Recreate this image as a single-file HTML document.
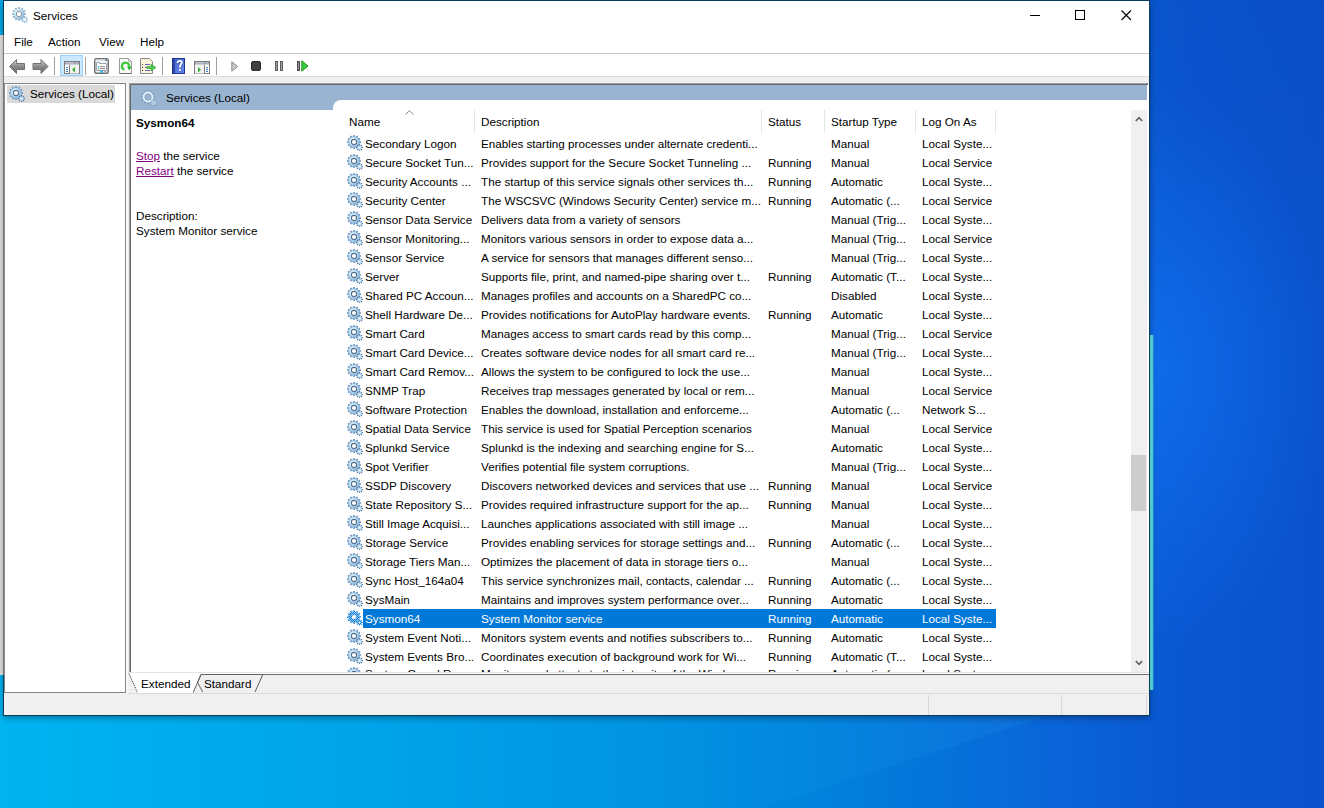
<!DOCTYPE html><html><head><meta charset="utf-8"><style>
*{box-sizing:border-box}
html,body{margin:0;padding:0}
body{width:1324px;height:808px;overflow:hidden;position:relative;font-family:"Liberation Sans", sans-serif;font-size:11.7px;color:#000;
background:
 radial-gradient(ellipse 170px 280px at 1160px 370px, rgba(20,125,255,0.5), rgba(20,125,255,0) 100%),
 linear-gradient(to bottom, rgba(0,20,110,0.07) 0%, rgba(0,20,110,0) 40%),
 linear-gradient(to right, #00b4f0 0%, #00a2e8 30%, #0094e2 48%, #0082dc 62%, #0a64d8 80%, #0a56d2 90%, #0a52cc 100%);}
.a{position:absolute;white-space:nowrap}
.t{position:absolute;white-space:nowrap;line-height:15px;height:15px}
#win{position:absolute;left:3px;top:0;width:1147px;height:716px;background:#fff;border:1px solid #0b3c5d;box-shadow:0 2px 6px rgba(0,0,0,0.35)}
#behind{position:absolute;left:0;top:35px;width:3px;height:640px;background:#e3e3e3}
.sep{position:absolute;width:1px;background:#a0a0a0}
.row{position:absolute;left:0;height:19px;line-height:19px;width:1000px}
.c{position:absolute;top:0;white-space:nowrap;overflow:hidden}
.hd{position:absolute;top:0;height:24px;line-height:24px;white-space:nowrap}
.hdiv{position:absolute;top:0;width:1px;height:23px;background:#e5e5e5}
</style></head><body>
<svg width="0" height="0" style="position:absolute">
<defs>
<radialGradient id="gb" cx="0.4" cy="0.4" r="0.7">
<stop offset="0" stop-color="#f4fcff"/><stop offset="0.55" stop-color="#cdeaf8"/><stop offset="1" stop-color="#8ab6dc"/>
</radialGradient>
<symbol id="gear" viewBox="0 0 16 16">
<g fill="#6d94bc"><rect x="6.2" y="0" width="1.6" height="2.4" transform="rotate(0 7 7)"/><rect x="6.2" y="0" width="1.6" height="2.4" transform="rotate(30 7 7)"/><rect x="6.2" y="0" width="1.6" height="2.4" transform="rotate(60 7 7)"/><rect x="6.2" y="0" width="1.6" height="2.4" transform="rotate(90 7 7)"/><rect x="6.2" y="0" width="1.6" height="2.4" transform="rotate(120 7 7)"/><rect x="6.2" y="0" width="1.6" height="2.4" transform="rotate(150 7 7)"/><rect x="6.2" y="0" width="1.6" height="2.4" transform="rotate(180 7 7)"/><rect x="6.2" y="0" width="1.6" height="2.4" transform="rotate(210 7 7)"/><rect x="6.2" y="0" width="1.6" height="2.4" transform="rotate(240 7 7)"/><rect x="6.2" y="0" width="1.6" height="2.4" transform="rotate(270 7 7)"/><rect x="6.2" y="0" width="1.6" height="2.4" transform="rotate(300 7 7)"/><rect x="6.2" y="0" width="1.6" height="2.4" transform="rotate(330 7 7)"/></g>
<circle cx="7" cy="7" r="4.3" fill="none" stroke="url(#gb)" stroke-width="2.6"/>
<circle cx="7" cy="7" r="5.6" fill="none" stroke="#7ea6cc" stroke-width="0.6"/>
<circle cx="7" cy="7" r="2.6" fill="#fff" stroke="#55708f" stroke-width="1.1"/>
<g fill="#55789e"><rect x="12.0" y="9.0" width="1.1" height="1.6" transform="rotate(0 12.55 12.55)"/><rect x="12.0" y="9.0" width="1.1" height="1.6" transform="rotate(45 12.55 12.55)"/><rect x="12.0" y="9.0" width="1.1" height="1.6" transform="rotate(90 12.55 12.55)"/><rect x="12.0" y="9.0" width="1.1" height="1.6" transform="rotate(135 12.55 12.55)"/><rect x="12.0" y="9.0" width="1.1" height="1.6" transform="rotate(180 12.55 12.55)"/><rect x="12.0" y="9.0" width="1.1" height="1.6" transform="rotate(225 12.55 12.55)"/><rect x="12.0" y="9.0" width="1.1" height="1.6" transform="rotate(270 12.55 12.55)"/><rect x="12.0" y="9.0" width="1.1" height="1.6" transform="rotate(315 12.55 12.55)"/></g>
<circle cx="12.55" cy="12.55" r="2.4" fill="#8fb6d8"/><circle cx="12.55" cy="12.55" r="1.9" fill="#c4e2f4"/><circle cx="12.55" cy="12.55" r="0.8" fill="#fff"/>
</symbol>
<symbol id="gearsel" viewBox="0 0 16 16">
<g fill="url(#dith)"><rect x="6.2" y="0" width="1.6" height="2.4" transform="rotate(0 7 7)"/><rect x="6.2" y="0" width="1.6" height="2.4" transform="rotate(30 7 7)"/><rect x="6.2" y="0" width="1.6" height="2.4" transform="rotate(60 7 7)"/><rect x="6.2" y="0" width="1.6" height="2.4" transform="rotate(90 7 7)"/><rect x="6.2" y="0" width="1.6" height="2.4" transform="rotate(120 7 7)"/><rect x="6.2" y="0" width="1.6" height="2.4" transform="rotate(150 7 7)"/><rect x="6.2" y="0" width="1.6" height="2.4" transform="rotate(180 7 7)"/><rect x="6.2" y="0" width="1.6" height="2.4" transform="rotate(210 7 7)"/><rect x="6.2" y="0" width="1.6" height="2.4" transform="rotate(240 7 7)"/><rect x="6.2" y="0" width="1.6" height="2.4" transform="rotate(270 7 7)"/><rect x="6.2" y="0" width="1.6" height="2.4" transform="rotate(300 7 7)"/><rect x="6.2" y="0" width="1.6" height="2.4" transform="rotate(330 7 7)"/></g>
<circle cx="7" cy="7" r="4.3" fill="none" stroke="url(#dith)" stroke-width="2.8"/>
<circle cx="7" cy="7" r="2.6" fill="#fff" stroke="url(#dith)" stroke-width="1.1"/>
<g fill="url(#dith)"><rect x="12.0" y="9.0" width="1.1" height="1.6" transform="rotate(0 12.55 12.55)"/><rect x="12.0" y="9.0" width="1.1" height="1.6" transform="rotate(45 12.55 12.55)"/><rect x="12.0" y="9.0" width="1.1" height="1.6" transform="rotate(90 12.55 12.55)"/><rect x="12.0" y="9.0" width="1.1" height="1.6" transform="rotate(135 12.55 12.55)"/><rect x="12.0" y="9.0" width="1.1" height="1.6" transform="rotate(180 12.55 12.55)"/><rect x="12.0" y="9.0" width="1.1" height="1.6" transform="rotate(225 12.55 12.55)"/><rect x="12.0" y="9.0" width="1.1" height="1.6" transform="rotate(270 12.55 12.55)"/><rect x="12.0" y="9.0" width="1.1" height="1.6" transform="rotate(315 12.55 12.55)"/></g>
<circle cx="12.55" cy="12.55" r="1.6" fill="none" stroke="url(#dith)" stroke-width="1.6"/>
</symbol>
<symbol id="gearfaint" viewBox="0 0 16 16">
<g fill="#6f8fb2" opacity="0.55"><rect x="6.2" y="0" width="1.6" height="2.4" transform="rotate(0 7 7)"/><rect x="6.2" y="0" width="1.6" height="2.4" transform="rotate(30 7 7)"/><rect x="6.2" y="0" width="1.6" height="2.4" transform="rotate(60 7 7)"/><rect x="6.2" y="0" width="1.6" height="2.4" transform="rotate(90 7 7)"/><rect x="6.2" y="0" width="1.6" height="2.4" transform="rotate(120 7 7)"/><rect x="6.2" y="0" width="1.6" height="2.4" transform="rotate(150 7 7)"/><rect x="6.2" y="0" width="1.6" height="2.4" transform="rotate(180 7 7)"/><rect x="6.2" y="0" width="1.6" height="2.4" transform="rotate(210 7 7)"/><rect x="6.2" y="0" width="1.6" height="2.4" transform="rotate(240 7 7)"/><rect x="6.2" y="0" width="1.6" height="2.4" transform="rotate(270 7 7)"/><rect x="6.2" y="0" width="1.6" height="2.4" transform="rotate(300 7 7)"/><rect x="6.2" y="0" width="1.6" height="2.4" transform="rotate(330 7 7)"/></g>
<circle cx="7" cy="7" r="4.4" fill="none" stroke="#dcf6ff" stroke-width="2"/>
<circle cx="7" cy="7" r="3.2" fill="none" stroke="#8a8c90" stroke-width="0.7" opacity="0.6"/>
<g fill="#6f8fb2" opacity="0.6"><rect x="12.0" y="9.0" width="1.1" height="1.6" transform="rotate(0 12.55 12.55)"/><rect x="12.0" y="9.0" width="1.1" height="1.6" transform="rotate(45 12.55 12.55)"/><rect x="12.0" y="9.0" width="1.1" height="1.6" transform="rotate(90 12.55 12.55)"/><rect x="12.0" y="9.0" width="1.1" height="1.6" transform="rotate(135 12.55 12.55)"/><rect x="12.0" y="9.0" width="1.1" height="1.6" transform="rotate(180 12.55 12.55)"/><rect x="12.0" y="9.0" width="1.1" height="1.6" transform="rotate(225 12.55 12.55)"/><rect x="12.0" y="9.0" width="1.1" height="1.6" transform="rotate(270 12.55 12.55)"/><rect x="12.0" y="9.0" width="1.1" height="1.6" transform="rotate(315 12.55 12.55)"/></g>
<circle cx="12.55" cy="12.55" r="1.7" fill="none" stroke="#c8e4f2" stroke-width="1.4" opacity="0.8"/>
</symbol>
<symbol id="geartitle" viewBox="0 0 16 16">
<g fill="#8eaccb"><rect x="6.2" y="0" width="1.6" height="2.4" transform="rotate(0 7 7)"/><rect x="6.2" y="0" width="1.6" height="2.4" transform="rotate(30 7 7)"/><rect x="6.2" y="0" width="1.6" height="2.4" transform="rotate(60 7 7)"/><rect x="6.2" y="0" width="1.6" height="2.4" transform="rotate(90 7 7)"/><rect x="6.2" y="0" width="1.6" height="2.4" transform="rotate(120 7 7)"/><rect x="6.2" y="0" width="1.6" height="2.4" transform="rotate(150 7 7)"/><rect x="6.2" y="0" width="1.6" height="2.4" transform="rotate(180 7 7)"/><rect x="6.2" y="0" width="1.6" height="2.4" transform="rotate(210 7 7)"/><rect x="6.2" y="0" width="1.6" height="2.4" transform="rotate(240 7 7)"/><rect x="6.2" y="0" width="1.6" height="2.4" transform="rotate(270 7 7)"/><rect x="6.2" y="0" width="1.6" height="2.4" transform="rotate(300 7 7)"/><rect x="6.2" y="0" width="1.6" height="2.4" transform="rotate(330 7 7)"/></g>
<circle cx="7" cy="7" r="4.3" fill="none" stroke="url(#gb)" stroke-width="2.6"/>
<circle cx="7" cy="7" r="2.7" fill="#fff" stroke="#8a8f96" stroke-width="1"/>
<g fill="#8eaccb"><rect x="12.0" y="9.0" width="1.1" height="1.6" transform="rotate(0 12.55 12.55)"/><rect x="12.0" y="9.0" width="1.1" height="1.6" transform="rotate(45 12.55 12.55)"/><rect x="12.0" y="9.0" width="1.1" height="1.6" transform="rotate(90 12.55 12.55)"/><rect x="12.0" y="9.0" width="1.1" height="1.6" transform="rotate(135 12.55 12.55)"/><rect x="12.0" y="9.0" width="1.1" height="1.6" transform="rotate(180 12.55 12.55)"/><rect x="12.0" y="9.0" width="1.1" height="1.6" transform="rotate(225 12.55 12.55)"/><rect x="12.0" y="9.0" width="1.1" height="1.6" transform="rotate(270 12.55 12.55)"/><rect x="12.0" y="9.0" width="1.1" height="1.6" transform="rotate(315 12.55 12.55)"/></g>
<circle cx="12.55" cy="12.55" r="2.4" fill="#a9c6e0"/><circle cx="12.55" cy="12.55" r="1.9" fill="#d4ecf8"/><circle cx="12.55" cy="12.55" r="0.8" fill="#fff"/>
</symbol>
<pattern id="dith" width="2" height="2" patternUnits="userSpaceOnUse">
<rect width="2" height="2" fill="#9cc8ea"/><rect width="1" height="1" fill="#0078d7"/><rect x="1" y="1" width="1" height="1" fill="#0078d7"/>
</pattern>
</defs></svg>
<div id="behind"></div>
<div class="a" style="left:560px;top:716px;width:487px;height:92px;clip-path:polygon(0 0,487px 0,201px 92px,0 92px);background:linear-gradient(to right,rgba(60,190,255,0) 0%,rgba(60,190,255,0.10) 100%)"></div>
<div id="win"></div>
<svg class="a" style="left:12px;top:7px" width="16" height="16"><use href="#geartitle"/></svg>
<div class="t" style="left:33px;top:8px">Services</div>
<div class="a" style="left:1030px;top:15px;width:10px;height:1px;background:#000"></div>
<div class="a" style="left:1075px;top:10px;width:10px;height:10px;border:1px solid #000"></div>
<svg class="a" style="left:1121px;top:10px" width="11" height="11"><path d="M0.5 0.5L10 10M10 0.5L0.5 10" stroke="#000" stroke-width="1.1"/></svg>
<div class="t" style="left:14px;top:34px">File</div>
<div class="t" style="left:48px;top:34px">Action</div>
<div class="t" style="left:99px;top:34px">View</div>
<div class="t" style="left:140px;top:34px">Help</div>
<div class="a" style="left:4px;top:53px;width:1145px;height:1px;background:#c8c8c8"></div>
<div class="a" style="left:4px;top:76px;width:1145px;height:639px;background:#f0f0f0"></div>
<div class="a" style="left:4px;top:76px;width:1145px;height:1px;background:#dcdcdc"></div>
<svg class="a" style="left:9px;top:59px" width="17" height="15"><defs><linearGradient id="ag" x1="0" y1="0" x2="0" y2="1"><stop offset="0" stop-color="#d8d8d8"/><stop offset="0.5" stop-color="#8a8a8a"/><stop offset="1" stop-color="#6a6a6a"/></linearGradient></defs><path d="M0.5 7.5L7.5 0.5V4.5H15.5V10.5H7.5V14.5Z" fill="url(#ag)" stroke="#707070" stroke-width="1"/></svg>
<svg class="a" style="left:32px;top:59px" width="17" height="15"><path d="M16 7.5L9 0.5V4.5H1V10.5H9V14.5Z" fill="url(#ag)" stroke="#707070" stroke-width="1"/></svg>
<div class="sep" style="left:54px;top:57px;height:18px"></div>
<div class="sep" style="left:85px;top:57px;height:18px"></div>
<div class="sep" style="left:162px;top:57px;height:18px"></div>
<div class="sep" style="left:216px;top:57px;height:18px"></div>
<div class="a" style="left:60px;top:55px;width:23px;height:21px;background:#cce8ff;border:1px solid #99d1ff"></div>
<svg class="a" style="left:64px;top:61px" width="16" height="13"><rect x="0.5" y="0.5" width="15" height="12" fill="#fff" stroke="#7c7c7c"/><rect x="1" y="1" width="14" height="3" fill="#8d96a3"/><rect x="1.5" y="1.4" width="8.5" height="0.9" fill="#e8ecf0"/><rect x="11.5" y="1.4" width="1" height="1" fill="#e8ecf0"/><rect x="13.3" y="1.4" width="1" height="1" fill="#e8ecf0"/><rect x="1" y="2.9" width="14" height="0.8" fill="#e8ecf0"/><rect x="6" y="4" width="9" height="8.5" fill="#f3f3f3"/><line x1="5.5" y1="4" x2="5.5" y2="12.5" stroke="#7c7c7c"/><rect x="2" y="6" width="2" height="1" fill="#3a78c8"/><rect x="2" y="8" width="2" height="1" fill="#3a78c8"/><rect x="2" y="10" width="2" height="1" fill="#3a78c8"/><path d="M11 5.8L8 8.7L11 11.6Z" fill="#33b233"/></svg>
<svg class="a" style="left:94px;top:58px" width="15" height="16"><rect x="0.75" y="0.75" width="13.5" height="14.5" rx="1.5" fill="#fff" stroke="#6e6e6e" stroke-width="1.5"/><rect x="1.5" y="1.5" width="12" height="2" fill="#dfe6ee"/><rect x="11.5" y="1.5" width="1.5" height="1.5" fill="#3a5a8a"/><path d="M2.5 4.5H5.5V5.5H12.5V12.5H2.5Z" fill="#fff" stroke="#9aa2b2" stroke-width="1"/><rect x="4" y="8" width="1.3" height="1.3" fill="#1ab4ff"/><rect x="4" y="10" width="1.3" height="1.3" fill="#888"/><rect x="6" y="8.2" width="5" height="1" fill="#8a8a8a"/><rect x="6" y="10.2" width="5" height="1" fill="#8a8a8a"/><rect x="6" y="13" width="3" height="1.8" fill="#1ec0ff"/><rect x="10" y="13" width="2.5" height="1.5" fill="#b0b0b0"/></svg>
<svg class="a" style="left:119px;top:58px" width="13" height="16"><path d="M0.5 0.5H9.5L12.5 3.5V15.5H0.5Z" fill="#fafafa" stroke="#9a9a9a"/><path d="M0.5 15.5H12.5" stroke="#6a6a6a"/><path d="M9.5 0.5V3.5H12.5" fill="none" stroke="#b0b0b0"/><path d="M5.4 11.7A3.6 3.6 0 1 1 10.1 8.6" fill="none" stroke="#3cc83c" stroke-width="2.2"/><path d="M8.0 8.4H12.6L10.4 12.4Z" fill="#22b022"/></svg>
<svg class="a" style="left:140px;top:58px" width="17" height="16"><path d="M0.5 0.5H9.5L12.5 3.5V15.5H0.5Z" fill="#fbf3d8" stroke="#8a8a8a"/><rect x="2" y="6" width="1" height="1" fill="#333"/><rect x="5" y="6" width="5" height="1" fill="#6a6ac0"/><rect x="2" y="9" width="1" height="1" fill="#333"/><rect x="5" y="9" width="5" height="1" fill="#6a6ac0"/><rect x="2" y="12" width="1" height="1" fill="#333"/><rect x="5" y="12" width="5" height="1" fill="#6a6ac0"/><path d="M7 8.5H11V6L16 9.5L11 13V10.5H7Z" fill="#4cc84c" stroke="#32a032" stroke-width="0.6"/></svg>
<svg class="a" style="left:172px;top:58px" width="13" height="16"><defs><linearGradient id="hg" x1="0" y1="0" x2="1" y2="1"><stop offset="0" stop-color="#4060c8"/><stop offset="1" stop-color="#6d8ef0"/></linearGradient></defs><rect x="0" y="0" width="13" height="16" fill="url(#hg)"/><rect x="0" y="0" width="3" height="16" fill="#2c46a8"/><rect x="0.5" y="0.5" width="12" height="15" fill="none" stroke="#1c3590"/><path d="M5.6 4.9C5.6 3.6 6.5 2.9 7.7 2.9C9 2.9 9.8 3.7 9.8 4.8C9.8 6.3 8 6.7 8 8.4V9.6" fill="none" stroke="#1a2a60" stroke-width="1.8" opacity="0.45" transform="translate(0.6 0.6)"/><rect x="7.7" y="11.6" width="1.8" height="1.8" fill="#1a2a60" opacity="0.45"/><path d="M5.6 4.9C5.6 3.6 6.5 2.9 7.7 2.9C9 2.9 9.8 3.7 9.8 4.8C9.8 6.3 8 6.7 8 8.4V9.6" fill="none" stroke="#fff" stroke-width="1.8"/><rect x="7.1" y="11" width="1.8" height="1.8" fill="#fff"/></svg>
<svg class="a" style="left:194px;top:61px" width="16" height="13"><rect x="0.5" y="0.5" width="15" height="12" fill="#fff" stroke="#7c7c7c"/><rect x="1" y="1" width="14" height="3" fill="#8d96a3"/><rect x="1.5" y="1.4" width="8.5" height="0.9" fill="#e8ecf0"/><rect x="11.5" y="1.4" width="1" height="1" fill="#e8ecf0"/><rect x="13.3" y="1.4" width="1" height="1" fill="#e8ecf0"/><rect x="1" y="2.9" width="14" height="0.8" fill="#e8ecf0"/><rect x="1" y="4" width="9.5" height="8.5" fill="#f3f3f3"/><line x1="10.5" y1="4" x2="10.5" y2="12.5" stroke="#7c7c7c"/><path d="M4 6L7 8.7L4 11.4Z" fill="#33b233"/><rect x="12" y="6" width="2" height="1" fill="#3a78c8"/><rect x="12" y="8" width="2" height="1" fill="#3a78c8"/><rect x="12" y="10" width="2" height="1" fill="#3a78c8"/></svg>
<svg class="a" style="left:231px;top:61px" width="8" height="11"><path d="M0.8 0.8L6.8 5.5L0.8 10.2Z" fill="#c8c8c8" stroke="#8c8c8c" stroke-width="1"/></svg>
<div class="a" style="left:251px;top:61px;width:10px;height:10px;background:#404040;border:1px solid #2a2a2a;border-radius:2px"></div>
<div class="a" style="left:275px;top:61px;width:3px;height:10px;background:#a0a0a0;border:1px solid #606060"></div>
<div class="a" style="left:280px;top:61px;width:3px;height:10px;background:#a0a0a0;border:1px solid #606060"></div>
<div class="a" style="left:297px;top:61px;width:3px;height:10px;background:#909090;border:1px solid #505050"></div>
<svg class="a" style="left:301px;top:60px" width="8" height="12"><path d="M0.8 0.8L7 6L0.8 11.2Z" fill="#3cc83c" stroke="#1e9a1e" stroke-width="1"/></svg>
<div class="a" style="left:4px;top:83px;width:122px;height:610px;background:#fff;border:1px solid #828790"></div>
<div class="a" style="left:126px;top:83px;width:2px;height:610px;background:#f8f8f8"></div>
<div class="a" style="left:7px;top:85px;width:108px;height:18px;background:#d9d9d9"></div>
<svg class="a" style="left:9px;top:86px" width="16" height="16"><use href="#gear"/></svg>
<div class="t" style="left:30px;top:86px">Services (Local)</div>
<div class="a" style="left:129px;top:83px;width:1020px;height:590px;background:#fff;border-top:1px solid #a0a0a0;border-left:1px solid #a0a0a0;border-right:1px solid #fff"></div>
<div class="a" style="left:130px;top:84px;width:1018px;height:589px;border-top:1px solid #696969;border-left:1px solid #696969"></div>
<div class="a" style="left:131px;top:85px;width:1016px;height:25px;background:#99b4d1"></div>
<svg class="a" style="left:141px;top:90px" width="16" height="16"><use href="#gearfaint"/></svg>
<div class="t" style="left:166px;top:90px">Services (Local)</div>
<div class="a" style="left:333px;top:100px;width:814px;height:572px;background:#fff;border-top-left-radius:8px"></div>
<div class="t" style="left:136px;top:115px;font-weight:bold">Sysmon64</div>
<div class="t" style="left:136px;top:148px"><span style="color:#800080;text-decoration:underline">Stop</span> the service</div>
<div class="t" style="left:136px;top:163px"><span style="color:#800080;text-decoration:underline">Restart</span> the service</div>
<div class="t" style="left:136px;top:208px">Description:</div>
<div class="t" style="left:136px;top:223px">System Monitor service</div>
<div class="a" style="left:0;top:110px;width:1130px;height:24px">
<div class="hd" style="left:349px">Name</div>
<div class="hd" style="left:481px">Description</div>
<div class="hd" style="left:768px">Status</div>
<div class="hd" style="left:831px">Startup Type</div>
<div class="hd" style="left:922px">Log On As</div>
<div class="hdiv" style="left:474px"></div>
<div class="hdiv" style="left:761px"></div>
<div class="hdiv" style="left:824px"></div>
<div class="hdiv" style="left:915px"></div>
<div class="hdiv" style="left:995px"></div>
</div>
<svg class="a" style="left:405px;top:110px" width="9" height="5"><path d="M0.5 4.5L4.5 0.7L8.5 4.5" fill="none" stroke="#808080" stroke-width="1"/></svg>
<div class="a" style="left:0;top:134px;width:1131px;height:538px;overflow:hidden">
<div class="row" style="top:0px">
<svg class="a" style="left:347px;top:1px" width="16" height="16"><use href="#gear"/></svg>
<div class="c" style="left:365px;width:110px;color:#000">Secondary Logon</div>
<div class="c" style="left:481px;width:280px;color:#000">Enables starting processes under alternate credenti...</div>
<div class="c" style="left:768px;width:60px;color:#000"></div>
<div class="c" style="left:831px;width:90px;color:#000">Manual</div>
<div class="c" style="left:922px;width:80px;color:#000">Local Syste...</div>
</div>
<div class="row" style="top:19px">
<svg class="a" style="left:347px;top:1px" width="16" height="16"><use href="#gear"/></svg>
<div class="c" style="left:365px;width:110px;color:#000">Secure Socket Tun...</div>
<div class="c" style="left:481px;width:280px;color:#000">Provides support for the Secure Socket Tunneling ...</div>
<div class="c" style="left:768px;width:60px;color:#000">Running</div>
<div class="c" style="left:831px;width:90px;color:#000">Manual</div>
<div class="c" style="left:922px;width:80px;color:#000">Local Service</div>
</div>
<div class="row" style="top:38px">
<svg class="a" style="left:347px;top:1px" width="16" height="16"><use href="#gear"/></svg>
<div class="c" style="left:365px;width:110px;color:#000">Security Accounts ...</div>
<div class="c" style="left:481px;width:280px;color:#000">The startup of this service signals other services th...</div>
<div class="c" style="left:768px;width:60px;color:#000">Running</div>
<div class="c" style="left:831px;width:90px;color:#000">Automatic</div>
<div class="c" style="left:922px;width:80px;color:#000">Local Syste...</div>
</div>
<div class="row" style="top:57px">
<svg class="a" style="left:347px;top:1px" width="16" height="16"><use href="#gear"/></svg>
<div class="c" style="left:365px;width:110px;color:#000">Security Center</div>
<div class="c" style="left:481px;width:280px;color:#000">The WSCSVC (Windows Security Center) service m...</div>
<div class="c" style="left:768px;width:60px;color:#000">Running</div>
<div class="c" style="left:831px;width:90px;color:#000">Automatic (...</div>
<div class="c" style="left:922px;width:80px;color:#000">Local Service</div>
</div>
<div class="row" style="top:76px">
<svg class="a" style="left:347px;top:1px" width="16" height="16"><use href="#gear"/></svg>
<div class="c" style="left:365px;width:110px;color:#000">Sensor Data Service</div>
<div class="c" style="left:481px;width:280px;color:#000">Delivers data from a variety of sensors</div>
<div class="c" style="left:768px;width:60px;color:#000"></div>
<div class="c" style="left:831px;width:90px;color:#000">Manual (Trig...</div>
<div class="c" style="left:922px;width:80px;color:#000">Local Syste...</div>
</div>
<div class="row" style="top:95px">
<svg class="a" style="left:347px;top:1px" width="16" height="16"><use href="#gear"/></svg>
<div class="c" style="left:365px;width:110px;color:#000">Sensor Monitoring...</div>
<div class="c" style="left:481px;width:280px;color:#000">Monitors various sensors in order to expose data a...</div>
<div class="c" style="left:768px;width:60px;color:#000"></div>
<div class="c" style="left:831px;width:90px;color:#000">Manual (Trig...</div>
<div class="c" style="left:922px;width:80px;color:#000">Local Service</div>
</div>
<div class="row" style="top:114px">
<svg class="a" style="left:347px;top:1px" width="16" height="16"><use href="#gear"/></svg>
<div class="c" style="left:365px;width:110px;color:#000">Sensor Service</div>
<div class="c" style="left:481px;width:280px;color:#000">A service for sensors that manages different senso...</div>
<div class="c" style="left:768px;width:60px;color:#000"></div>
<div class="c" style="left:831px;width:90px;color:#000">Manual (Trig...</div>
<div class="c" style="left:922px;width:80px;color:#000">Local Syste...</div>
</div>
<div class="row" style="top:133px">
<svg class="a" style="left:347px;top:1px" width="16" height="16"><use href="#gear"/></svg>
<div class="c" style="left:365px;width:110px;color:#000">Server</div>
<div class="c" style="left:481px;width:280px;color:#000">Supports file, print, and named-pipe sharing over t...</div>
<div class="c" style="left:768px;width:60px;color:#000">Running</div>
<div class="c" style="left:831px;width:90px;color:#000">Automatic (T...</div>
<div class="c" style="left:922px;width:80px;color:#000">Local Syste...</div>
</div>
<div class="row" style="top:152px">
<svg class="a" style="left:347px;top:1px" width="16" height="16"><use href="#gear"/></svg>
<div class="c" style="left:365px;width:110px;color:#000">Shared PC Accoun...</div>
<div class="c" style="left:481px;width:280px;color:#000">Manages profiles and accounts on a SharedPC co...</div>
<div class="c" style="left:768px;width:60px;color:#000"></div>
<div class="c" style="left:831px;width:90px;color:#000">Disabled</div>
<div class="c" style="left:922px;width:80px;color:#000">Local Syste...</div>
</div>
<div class="row" style="top:171px">
<svg class="a" style="left:347px;top:1px" width="16" height="16"><use href="#gear"/></svg>
<div class="c" style="left:365px;width:110px;color:#000">Shell Hardware De...</div>
<div class="c" style="left:481px;width:280px;color:#000">Provides notifications for AutoPlay hardware events.</div>
<div class="c" style="left:768px;width:60px;color:#000">Running</div>
<div class="c" style="left:831px;width:90px;color:#000">Automatic</div>
<div class="c" style="left:922px;width:80px;color:#000">Local Syste...</div>
</div>
<div class="row" style="top:190px">
<svg class="a" style="left:347px;top:1px" width="16" height="16"><use href="#gear"/></svg>
<div class="c" style="left:365px;width:110px;color:#000">Smart Card</div>
<div class="c" style="left:481px;width:280px;color:#000">Manages access to smart cards read by this comp...</div>
<div class="c" style="left:768px;width:60px;color:#000"></div>
<div class="c" style="left:831px;width:90px;color:#000">Manual (Trig...</div>
<div class="c" style="left:922px;width:80px;color:#000">Local Service</div>
</div>
<div class="row" style="top:209px">
<svg class="a" style="left:347px;top:1px" width="16" height="16"><use href="#gear"/></svg>
<div class="c" style="left:365px;width:110px;color:#000">Smart Card Device...</div>
<div class="c" style="left:481px;width:280px;color:#000">Creates software device nodes for all smart card re...</div>
<div class="c" style="left:768px;width:60px;color:#000"></div>
<div class="c" style="left:831px;width:90px;color:#000">Manual (Trig...</div>
<div class="c" style="left:922px;width:80px;color:#000">Local Syste...</div>
</div>
<div class="row" style="top:228px">
<svg class="a" style="left:347px;top:1px" width="16" height="16"><use href="#gear"/></svg>
<div class="c" style="left:365px;width:110px;color:#000">Smart Card Remov...</div>
<div class="c" style="left:481px;width:280px;color:#000">Allows the system to be configured to lock the use...</div>
<div class="c" style="left:768px;width:60px;color:#000"></div>
<div class="c" style="left:831px;width:90px;color:#000">Manual</div>
<div class="c" style="left:922px;width:80px;color:#000">Local Syste...</div>
</div>
<div class="row" style="top:247px">
<svg class="a" style="left:347px;top:1px" width="16" height="16"><use href="#gear"/></svg>
<div class="c" style="left:365px;width:110px;color:#000">SNMP Trap</div>
<div class="c" style="left:481px;width:280px;color:#000">Receives trap messages generated by local or rem...</div>
<div class="c" style="left:768px;width:60px;color:#000"></div>
<div class="c" style="left:831px;width:90px;color:#000">Manual</div>
<div class="c" style="left:922px;width:80px;color:#000">Local Service</div>
</div>
<div class="row" style="top:266px">
<svg class="a" style="left:347px;top:1px" width="16" height="16"><use href="#gear"/></svg>
<div class="c" style="left:365px;width:110px;color:#000">Software Protection</div>
<div class="c" style="left:481px;width:280px;color:#000">Enables the download, installation and enforceme...</div>
<div class="c" style="left:768px;width:60px;color:#000"></div>
<div class="c" style="left:831px;width:90px;color:#000">Automatic (...</div>
<div class="c" style="left:922px;width:80px;color:#000">Network S...</div>
</div>
<div class="row" style="top:285px">
<svg class="a" style="left:347px;top:1px" width="16" height="16"><use href="#gear"/></svg>
<div class="c" style="left:365px;width:110px;color:#000">Spatial Data Service</div>
<div class="c" style="left:481px;width:280px;color:#000">This service is used for Spatial Perception scenarios</div>
<div class="c" style="left:768px;width:60px;color:#000"></div>
<div class="c" style="left:831px;width:90px;color:#000">Manual</div>
<div class="c" style="left:922px;width:80px;color:#000">Local Service</div>
</div>
<div class="row" style="top:304px">
<svg class="a" style="left:347px;top:1px" width="16" height="16"><use href="#gear"/></svg>
<div class="c" style="left:365px;width:110px;color:#000">Splunkd Service</div>
<div class="c" style="left:481px;width:280px;color:#000">Splunkd is the indexing and searching engine for S...</div>
<div class="c" style="left:768px;width:60px;color:#000"></div>
<div class="c" style="left:831px;width:90px;color:#000">Automatic</div>
<div class="c" style="left:922px;width:80px;color:#000">Local Syste...</div>
</div>
<div class="row" style="top:323px">
<svg class="a" style="left:347px;top:1px" width="16" height="16"><use href="#gear"/></svg>
<div class="c" style="left:365px;width:110px;color:#000">Spot Verifier</div>
<div class="c" style="left:481px;width:280px;color:#000">Verifies potential file system corruptions.</div>
<div class="c" style="left:768px;width:60px;color:#000"></div>
<div class="c" style="left:831px;width:90px;color:#000">Manual (Trig...</div>
<div class="c" style="left:922px;width:80px;color:#000">Local Syste...</div>
</div>
<div class="row" style="top:342px">
<svg class="a" style="left:347px;top:1px" width="16" height="16"><use href="#gear"/></svg>
<div class="c" style="left:365px;width:110px;color:#000">SSDP Discovery</div>
<div class="c" style="left:481px;width:280px;color:#000">Discovers networked devices and services that use ...</div>
<div class="c" style="left:768px;width:60px;color:#000">Running</div>
<div class="c" style="left:831px;width:90px;color:#000">Manual</div>
<div class="c" style="left:922px;width:80px;color:#000">Local Service</div>
</div>
<div class="row" style="top:361px">
<svg class="a" style="left:347px;top:1px" width="16" height="16"><use href="#gear"/></svg>
<div class="c" style="left:365px;width:110px;color:#000">State Repository S...</div>
<div class="c" style="left:481px;width:280px;color:#000">Provides required infrastructure support for the ap...</div>
<div class="c" style="left:768px;width:60px;color:#000">Running</div>
<div class="c" style="left:831px;width:90px;color:#000">Manual</div>
<div class="c" style="left:922px;width:80px;color:#000">Local Syste...</div>
</div>
<div class="row" style="top:380px">
<svg class="a" style="left:347px;top:1px" width="16" height="16"><use href="#gear"/></svg>
<div class="c" style="left:365px;width:110px;color:#000">Still Image Acquisi...</div>
<div class="c" style="left:481px;width:280px;color:#000">Launches applications associated with still image ...</div>
<div class="c" style="left:768px;width:60px;color:#000"></div>
<div class="c" style="left:831px;width:90px;color:#000">Manual</div>
<div class="c" style="left:922px;width:80px;color:#000">Local Syste...</div>
</div>
<div class="row" style="top:399px">
<svg class="a" style="left:347px;top:1px" width="16" height="16"><use href="#gear"/></svg>
<div class="c" style="left:365px;width:110px;color:#000">Storage Service</div>
<div class="c" style="left:481px;width:280px;color:#000">Provides enabling services for storage settings and...</div>
<div class="c" style="left:768px;width:60px;color:#000">Running</div>
<div class="c" style="left:831px;width:90px;color:#000">Automatic (...</div>
<div class="c" style="left:922px;width:80px;color:#000">Local Syste...</div>
</div>
<div class="row" style="top:418px">
<svg class="a" style="left:347px;top:1px" width="16" height="16"><use href="#gear"/></svg>
<div class="c" style="left:365px;width:110px;color:#000">Storage Tiers Man...</div>
<div class="c" style="left:481px;width:280px;color:#000">Optimizes the placement of data in storage tiers o...</div>
<div class="c" style="left:768px;width:60px;color:#000"></div>
<div class="c" style="left:831px;width:90px;color:#000">Manual</div>
<div class="c" style="left:922px;width:80px;color:#000">Local Syste...</div>
</div>
<div class="row" style="top:437px">
<svg class="a" style="left:347px;top:1px" width="16" height="16"><use href="#gear"/></svg>
<div class="c" style="left:365px;width:110px;color:#000">Sync Host_164a04</div>
<div class="c" style="left:481px;width:280px;color:#000">This service synchronizes mail, contacts, calendar ...</div>
<div class="c" style="left:768px;width:60px;color:#000">Running</div>
<div class="c" style="left:831px;width:90px;color:#000">Automatic (...</div>
<div class="c" style="left:922px;width:80px;color:#000">Local Syste...</div>
</div>
<div class="row" style="top:456px">
<svg class="a" style="left:347px;top:1px" width="16" height="16"><use href="#gear"/></svg>
<div class="c" style="left:365px;width:110px;color:#000">SysMain</div>
<div class="c" style="left:481px;width:280px;color:#000">Maintains and improves system performance over...</div>
<div class="c" style="left:768px;width:60px;color:#000">Running</div>
<div class="c" style="left:831px;width:90px;color:#000">Automatic</div>
<div class="c" style="left:922px;width:80px;color:#000">Local Syste...</div>
</div>
<div class="row" style="top:475px">
<div class="a" style="left:363px;top:0;width:633px;height:19px;background:#0078d7"></div>
<svg class="a" style="left:347px;top:1px" width="16" height="16"><use href="#gearsel"/></svg>
<div class="c" style="left:365px;width:110px;color:#fff">Sysmon64</div>
<div class="c" style="left:481px;width:280px;color:#fff">System Monitor service</div>
<div class="c" style="left:768px;width:60px;color:#fff">Running</div>
<div class="c" style="left:831px;width:90px;color:#fff">Automatic</div>
<div class="c" style="left:922px;width:80px;color:#fff">Local Syste...</div>
</div>
<div class="row" style="top:494px">
<svg class="a" style="left:347px;top:1px" width="16" height="16"><use href="#gear"/></svg>
<div class="c" style="left:365px;width:110px;color:#000">System Event Noti...</div>
<div class="c" style="left:481px;width:280px;color:#000">Monitors system events and notifies subscribers to...</div>
<div class="c" style="left:768px;width:60px;color:#000">Running</div>
<div class="c" style="left:831px;width:90px;color:#000">Automatic</div>
<div class="c" style="left:922px;width:80px;color:#000">Local Syste...</div>
</div>
<div class="row" style="top:513px">
<svg class="a" style="left:347px;top:1px" width="16" height="16"><use href="#gear"/></svg>
<div class="c" style="left:365px;width:110px;color:#000">System Events Bro...</div>
<div class="c" style="left:481px;width:280px;color:#000">Coordinates execution of background work for Wi...</div>
<div class="c" style="left:768px;width:60px;color:#000">Running</div>
<div class="c" style="left:831px;width:90px;color:#000">Automatic (T...</div>
<div class="c" style="left:922px;width:80px;color:#000">Local Syste...</div>
</div>
<div class="row" style="top:532px">
<svg class="a" style="left:347px;top:1px" width="16" height="16"><use href="#gear"/></svg>
<div class="c" style="top:-2px;left:365px;width:110px;color:#000">System Guard R...</div>
<div class="c" style="top:-2px;left:481px;width:280px;color:#000">Monitors and attests to the integrity of the Windo...</div>
<div class="c" style="top:-2px;left:768px;width:60px;color:#000">Running</div>
<div class="c" style="top:-2px;left:831px;width:90px;color:#000">Automatic (...</div>
<div class="c" style="top:-2px;left:922px;width:80px;color:#000">Local Syste...</div>
</div>
</div>
<div class="a" style="left:1131px;top:110px;width:16px;height:562px;background:#f0f0f0"></div>
<svg class="a" style="left:1135px;top:116px" width="8" height="6"><path d="M0.8 5L4 1.6L7.2 5" fill="none" stroke="#606060" stroke-width="1.6"/></svg>
<svg class="a" style="left:1135px;top:660px" width="8" height="6"><path d="M0.8 1L4 4.4L7.2 1" fill="none" stroke="#606060" stroke-width="1.6"/></svg>
<div class="a" style="left:1131px;top:455px;width:15px;height:56px;background:#cdcdcd"></div>
<svg class="a" style="left:128px;top:672px" width="1021" height="22"><rect x="0" y="0" width="1021" height="1" fill="#e3e3e3"/><rect x="0" y="1" width="1021" height="1" fill="#fff"/><rect x="134" y="2" width="887" height="1" fill="#6d6d6d"/><path d="M1 1H73L64.9 21H9.2Z" fill="#fff"/><path d="M73 2.5L69.6 10.6L74.7 20H127L134.8 2.5Z" fill="#f0f0f0"/><path d="M73 2.5H134.8M134.8 2.5L127 20M73 2.5L69.6 10.6L74.7 20" fill="none" stroke="#606060" stroke-width="1"/><path d="M65.2 20.5L73 2.5" fill="none" stroke="#606060" stroke-width="1"/><path d="M1 1.5L9.4 20.5" fill="none" stroke="#404040" stroke-width="1" stroke-dasharray="1.2 0.9"/><rect x="0" y="21" width="1021" height="1" fill="#dadada"/></svg>
<div class="t" style="left:141px;top:676px">Extended</div>
<div class="t" style="left:204px;top:676px">Standard</div>

<div class="a" style="left:928px;top:695px;width:1px;height:20px;background:#d7d7d7"></div>
<div class="a" style="left:1061px;top:695px;width:1px;height:20px;background:#d7d7d7"></div>
<div class="a" style="left:1146px;top:695px;width:1px;height:20px;background:#d7d7d7"></div>
<div class="a" style="left:1150px;top:335px;width:4px;height:355px;background:linear-gradient(90deg,#50cccc 0%,#50cccc 60%,rgba(40,150,230,0) 100%)"></div>
<div class="a" style="left:3px;top:35px;width:1px;height:640px;background:#7c7c7c"></div>
</body></html>
